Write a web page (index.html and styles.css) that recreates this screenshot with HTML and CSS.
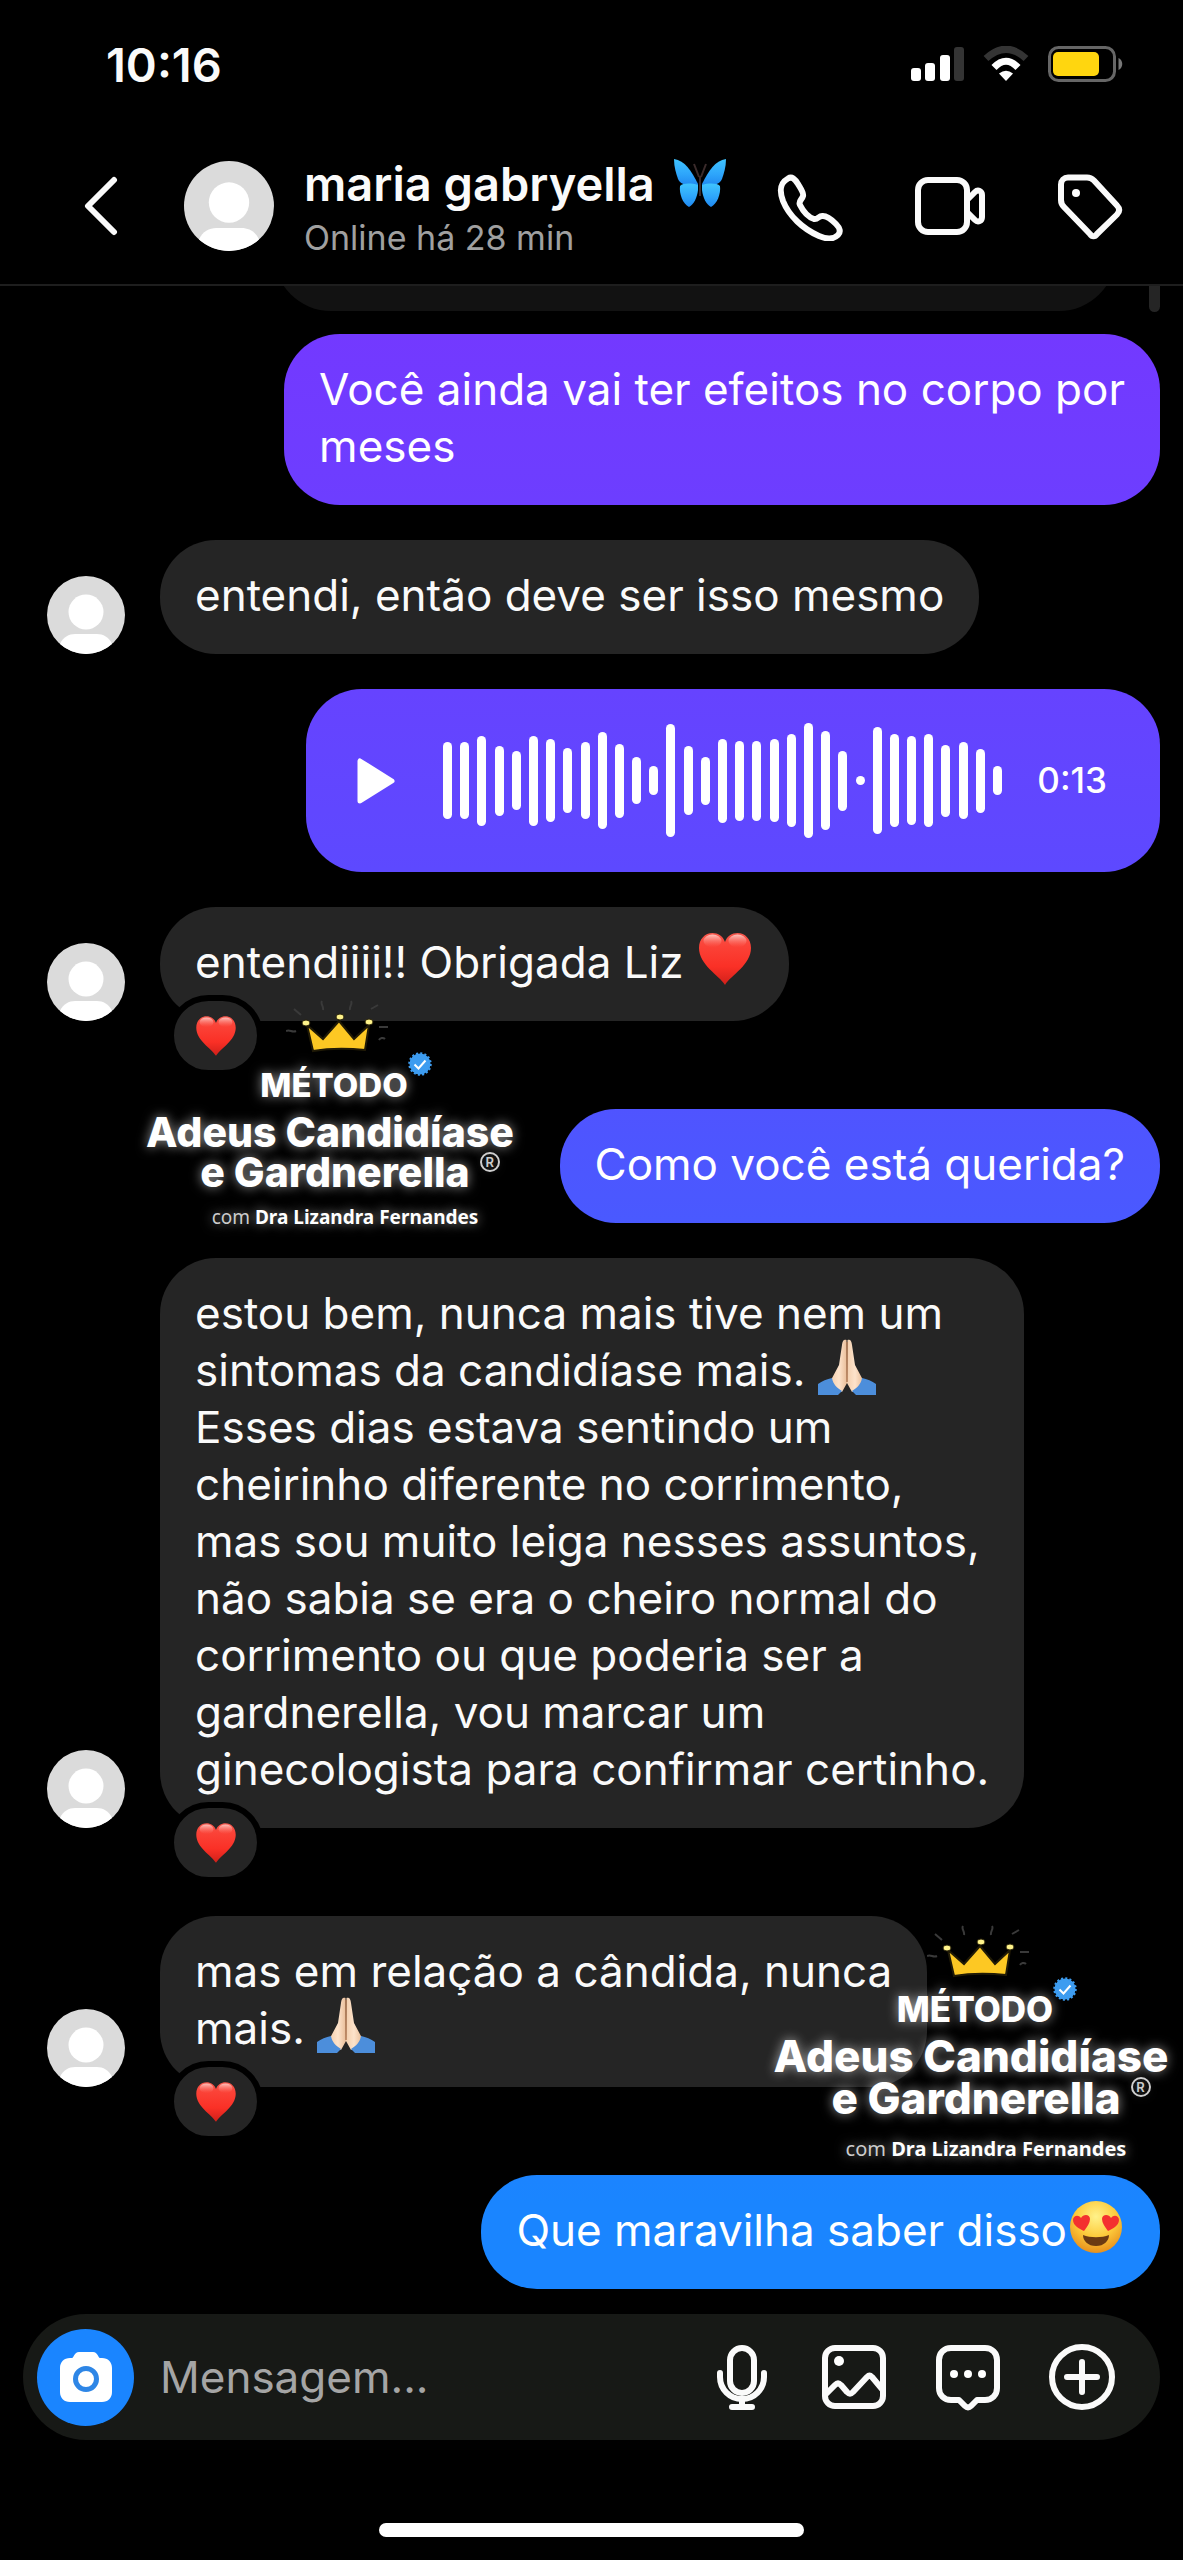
FILE: index.html
```html
<!DOCTYPE html>
<html lang="pt-BR">
	<head>
		<meta charset="utf-8">
		<title>maria gabryella</title>
		<meta name="viewport" content="width=device-width, initial-scale=1.0">
		<link rel="stylesheet" href="styles.css">
	</head>
	<body>
		<svg class="sprite" aria-hidden="true">
			<defs>
				<linearGradient id="heart-fill" x1="0" y1="0" x2="0" y2="1">
					<stop offset="0" stop-color="#f5574c"/>
					<stop offset=".25" stop-color="#fb4237"/>
					<stop offset=".65" stop-color="#fa3026"/>
					<stop offset="1" stop-color="#d0201a"/>
				</linearGradient>
				<linearGradient id="shine-fill" x1="0" y1="0" x2="0" y2="1">
					<stop offset="0" stop-color="#ffd0cb" stop-opacity=".9"/>
					<stop offset="1" stop-color="#ff6a5e" stop-opacity="0"/>
				</linearGradient>
				<linearGradient id="wing-fill" x1="0" y1="0" x2="0" y2="1">
					<stop offset="0" stop-color="#3fc4ff"/>
					<stop offset=".55" stop-color="#2ea6fb"/>
					<stop offset="1" stop-color="#1f88f0"/>
				</linearGradient>
				<radialGradient id="face-fill" cx=".5" cy=".3" r=".7">
					<stop offset="0" stop-color="#fff28a"/>
					<stop offset=".55" stop-color="#fdcb3c"/>
					<stop offset="1" stop-color="#e8901c"/>
				</radialGradient>
				<linearGradient id="skin-fill" x1="0" y1="0" x2="1" y2="0">
					<stop offset="0" stop-color="#f3cfae"/>
					<stop offset=".5" stop-color="#fde3cb"/>
					<stop offset="1" stop-color="#e9bd98"/>
				</linearGradient>
			</defs>
			<symbol id="avatar" viewBox="0 0 78 78">
				<circle cx="39" cy="39" r="39" fill="#dbdbdb"/>
				<circle cx="39" cy="36" r="17.500" fill="#fff"/>
				<path d="M13 68c3-7 9-10 15-10h22c6 0 12 3 15 10a39 39 0 0 1-52 0z" fill="#fff"/>
			</symbol>
			<symbol id="heart" viewBox="0 0 58 58">
				<path d="M29 55C23 45 3 35 3 18 3 9 9 3 16.500 3 22 3 27 6 29 12 31 6 36 3 41.500 3 49 3 55 9 55 18 55 35 35 45 29 55z" fill="url(#heart-fill)"/>
				<ellipse cx="16.500" cy="11" rx="9" ry="6.500" fill="url(#shine-fill)"/>
				<ellipse cx="41.500" cy="11" rx="9" ry="6.500" fill="url(#shine-fill)"/>
			</symbol>
			<symbol id="hands" viewBox="0 0 58 58">
				<path d="M28.500 2c-3-1-4 1-4.500 5l-3 20-8 15c2 7 6 10 11 12l5-9z" fill="url(#skin-fill)"/>
				<path d="M29.500 2c3-1 4 1 4.500 5l3 20 8 15c-2 7-6 10-11 12l-5-9z" fill="url(#skin-fill)"/>
				<path d="M0 46c4-3 9-5 14-6 1 6 5 10 10 13l-4 4H0z" fill="#4c8edb"/>
				<path d="M58 46c-4-3-9-5-14-6-1 6-5 10-10 13l4 4h20z" fill="#4c8edb"/>
				<path d="M29 4v40" stroke="#b07a54" stroke-width="1.500"/>
			</symbol>
			<symbol id="crown" viewBox="0 0 104 54">
				<path d="M8 10l7 6M36 2c-2 3 2 5 1 9M65 2c2 3-2 5-1 9M92 6l-7 4M0 32c4-2 6 2 10 0M93 28h9M93 41c1-2 4-3 6-1" fill="none" stroke="#3a3a3a" stroke-width="2"/>
				<path d="M21 26l16 14L53 22l15 18 15-14-4 25c-18-2-35-2-52 1z" fill="#fdc823" stroke="#201a06" stroke-width="2"/>
				<ellipse cx="20" cy="24" rx="4" ry="3" fill="#fff38b" stroke="#2b240a"/>
				<ellipse cx="54" cy="18" rx="4" ry="3" fill="#fff38b" stroke="#2b240a"/>
				<ellipse cx="83" cy="23" rx="4" ry="3" fill="#fff38b" stroke="#2b240a"/>
			</symbol>
			<symbol id="verified" viewBox="0 0 24 24">
				<circle cx="12" cy="12" r="10.500" fill="#3d9cf0" stroke="#3d9cf0" stroke-width="2.500" stroke-dasharray="2 2.120"/>
				<path d="M6.500 12.500l4 4 7-8" fill="none" stroke="#fff" stroke-width="2"/>
			</symbol>
		</svg>

		<header class="top">
			<div class="status">
				<time>10:16</time>
				<div class="status-icons">
					<svg width="53" height="36" viewBox="0 0 53 36">
						<g fill="#fff">
							<rect y="22" width="10" height="13" rx="3"/>
							<rect x="14" y="17" width="10" height="18" rx="3"/>
							<rect x="29" y="9" width="10" height="26" rx="3"/>
						</g>
						<rect x="43" y="1" width="10" height="34" rx="3" fill="#343434"/>
					</svg>
					<svg width="46" height="36" viewBox="0 0 46 36">
						<path d="M3 12.500Q23-6 43 12.500" fill="none" stroke="#343434" stroke-width="7"/>
						<path d="M11 21.500Q23 9 35 21.500" fill="none" stroke="#fff" stroke-width="7"/>
						<path d="M16 27.500Q23 22 30 27.500L23 35z" fill="#fff"/>
					</svg>
					<svg width="75" height="36" viewBox="0 0 75 36">
						<rect x="1.500" y="1.500" width="65" height="33" rx="9" fill="none" stroke="#666" stroke-width="3"/>
						<rect x="5" y="6" width="46" height="24" rx="5" fill="#ffd60f"/>
						<path d="M70.500 12c5 2 5 10 0 12z" fill="#777"/>
					</svg>
				</div>
			</div>
			<div class="contact">
				<button class="back" aria-label="Voltar">
					<svg width="34" height="60" viewBox="0 0 34 60"><path d="M30 4L4 30l26 26" class="line"/></svg>
				</button>
				<svg class="avatar-big" role="img" aria-label="Foto do perfil"><use href="#avatar"/></svg>
				<div class="who">
					<h1>maria gabryella
						<svg class="butterfly" viewBox="0 0 58 50" role="img" aria-label="borboleta">
							<path d="M27 26C20 12 14 3 3 1c0 8 2 14 4 20 1 3 4 5 8 6l12 1z" fill="url(#wing-fill)"/>
							<path d="M31 26C38 12 44 3 55 1c0 8-2 14-4 20-1 3-4 5-8 6l-12 1z" fill="url(#wing-fill)"/>
							<path d="M27 27c-7-2-15-2-18 1-1 8 3 18 9 21 5-3 8-9 9-17zM31 27c7-2 15-2 18 1 1 8-3 18-9 21-5-3-8-9-9-17z" fill="url(#wing-fill)"/>
							<path d="M29 18v20M28 19L23 6M30 19l5-13" stroke="#3b2b2b" stroke-width="2" fill="none"/>
						</svg>
					</h1>
					<p>Online há 28 min</p>
				</div>
				<nav class="actions">
					<button aria-label="Ligar">
						<svg width="70" height="70" viewBox="0 0 70 70"><path class="line" d="M13 7.500C17 5 20 8 23 13c3 5 6 9 5 12-1 4-5 5-3 9 3 6 8 12 14 14 4 1 5-4 9-3 4 0 9 4 13 8 4 4 5 8 2 11-5 5-12 4-19 1C28 58 14 45 8 30 4 19 5 12 13 7.500z"/></svg>
					</button>
					<button aria-label="Chamada de vídeo">
						<svg width="70" height="70" viewBox="0 0 70 70"><rect class="line" x="3" y="9" width="49" height="52" rx="10"/><path class="line" d="M53 28l7-7c3-3 7-1 7 3v22c0 4-4 6-7 3l-7-7"/></svg>
					</button>
					<button aria-label="Etiqueta">
						<svg width="70" height="70" viewBox="0 0 70 70"><path class="line" d="M13 6.500h19c3 0 5 1 7 3l23 25c3 3 3 6 0 9L42 63c-2 3-5 3-7 0L9 36c-2-2-3-4-3-7V13.500c0-4 3-7 7-7z"/><circle cx="21" cy="22" r="4" fill="#fff"/></svg>
					</button>
				</nav>
			</div>
		</header>

		<main class="chat">
			<div class="scrollbar"></div>
			<div class="faded"><div></div></div>
			<div class="msg out">
				<p class="bubble">Você ainda vai ter efeitos no corpo por<br>meses</p>
			</div>
			<div class="msg">
				<svg class="avatar"><use href="#avatar"/></svg>
				<p class="bubble">entendi, então deve ser isso mesmo</p>
			</div>
			<div class="msg out">
				<div class="bubble voice">
					<button aria-label="Reproduzir">
						<svg width="40" height="48" viewBox="0 0 40 48"><path d="M4 4v40l32-20z" fill="#fff" stroke="#fff" stroke-width="5" stroke-linejoin="round"/></svg>
					</button>
					<div class="wave">
						<i style="height:77px"></i><i style="height:77px"></i><i style="height:90px"></i><i style="height:70px"></i><i style="height:59px"></i><i style="height:90px"></i><i style="height:83px"></i><i style="height:65px"></i><i style="height:77px"></i><i style="height:97px"></i><i style="height:74px"></i>
						<i style="height:47px"></i><i style="height:29px"></i><i style="height:113px"></i><i style="height:69px"></i><i style="height:48px"></i><i style="height:84px"></i><i style="height:80px"></i><i style="height:80px"></i><i style="height:83px"></i><i style="height:93px"></i><i style="height:115px"></i>
						<i style="height:99px"></i><i style="height:60px"></i><i style="height:9px"></i><i style="height:107px"></i><i style="height:93px"></i><i style="height:89px"></i><i style="height:93px"></i><i style="height:72px"></i><i style="height:77px"></i><i style="height:64px"></i><i style="height:29px"></i>
					</div>
					<span>0:13</span>
				</div>
			</div>
			<div class="msg reacted">
				<svg class="avatar"><use href="#avatar"/></svg>
				<p class="bubble">entendiiii!! Obrigada Liz <svg class="emoji" role="img" aria-label="coração"><use href="#heart"/></svg></p>
				<span class="reaction"><svg role="img" aria-label="coração"><use href="#heart"/></svg></span>
				<div class="brand">
					<svg class="crown"><use href="#crown"/></svg>
					<div class="metodo">MÉTODO<svg class="verified"><use href="#verified"/></svg></div>
					<div class="title">Adeus Candidíase</div>
					<div class="title second">e Gardnerella<sup>R</sup></div>
					<div class="author">com <b>Dra Lizandra Fernandes</b></div>
				</div>
			</div>
			<div class="msg out">
				<p class="bubble">Como você está querida?</p>
			</div>
			<div class="msg reacted">
				<svg class="avatar"><use href="#avatar"/></svg>
				<p class="bubble">estou bem, nunca mais tive nem um<br>sintomas da candidíase mais. <svg class="emoji" role="img" aria-label="mãos juntas"><use href="#hands"/></svg><br>Esses dias estava sentindo um<br>cheirinho diferente no corrimento,<br>mas sou muito leiga nesses assuntos,<br>não sabia se era o cheiro normal do<br>corrimento ou que poderia ser a<br>gardnerella, vou marcar um<br>ginecologista para confirmar certinho.</p>
				<span class="reaction"><svg role="img" aria-label="coração"><use href="#heart"/></svg></span>
			</div>
			<div class="msg reacted">
				<svg class="avatar"><use href="#avatar"/></svg>
				<p class="bubble">mas em relação a cândida, nunca<br>mais. <svg class="emoji" role="img" aria-label="mãos juntas"><use href="#hands"/></svg></p>
				<span class="reaction"><svg role="img" aria-label="coração"><use href="#heart"/></svg></span>
				<div class="brand large">
					<svg class="crown"><use href="#crown"/></svg>
					<div class="metodo">MÉTODO<svg class="verified"><use href="#verified"/></svg></div>
					<div class="title">Adeus Candidíase</div>
					<div class="title second">e Gardnerella<sup>R</sup></div>
					<div class="author">com <b>Dra Lizandra Fernandes</b></div>
				</div>
			</div>
			<div class="msg out">
				<p class="bubble">Que maravilha saber disso<svg class="emoji" viewBox="0 0 58 58" role="img" aria-label="olhos de coração">
					<circle cx="29" cy="29" r="26" fill="url(#face-fill)"/>
					<path d="M16 37c7 3 19 3 26 0 0 6-5 11-13 11s-13-5-13-11z" fill="#6b3a12"/>
					<path d="M17 33c-4-2-11-5-11-11 0-4 5-6 8-2 2-4 9-4 9 1 0 4-3 8-6 12zM41 33c4-2 11-5 11-11 0-4-5-6-8-2-2-4-9-4-9 1 0 4 3 8 6 12z" fill="#f4302f"/>
				</svg></p>
			</div>
		</main>

		<form class="composer">
			<button type="button" class="camera" aria-label="Câmera">
				<svg width="54" height="52" viewBox="0 0 54 52"><path d="M11 7h2c2 0 2-6 7-6h14c5 0 5 6 7 6h2c6 0 10 4 10 10v24c0 6-4 10-10 10H11C5 51 1 47 1 41V17C1 11 5 7 11 7z" fill="#fff"/><circle cx="27" cy="28" r="10.500" fill="#fff" stroke="#2e86e6" stroke-width="5"/></svg>
			</button>
			<input type="text" placeholder="Mensagem..." aria-label="Mensagem">
			<button type="button" aria-label="Gravar áudio">
				<svg width="70" height="70" viewBox="0 0 70 70"><rect class="line" x="25" y="6" width="24" height="45" rx="12"/><path class="line" d="M15 31v4a22 22 0 0 0 44 0v-4M37 57v8M27 65h20"/></svg>
			</button>
			<button type="button" aria-label="Galeria">
				<svg width="70" height="70" viewBox="0 0 70 70"><rect class="line" x="6" y="6" width="58" height="58" rx="10"/><circle cx="20" cy="19" r="5" fill="#fff"/><path class="line" d="M7 52l9-9c2-2 4-2 6 0l6 7c2 2 4 2 6 0l14-15c2-2 3-2 5 0l10 12"/></svg>
			</button>
			<button type="button" aria-label="Figurinhas">
				<svg width="70" height="70" viewBox="0 0 70 70"><path class="line" d="M18 6h34c7 0 12 5 12 12v28c0 7-5 12-12 12h-8l-6 6c-2 2-4 2-6 0l-6-6h-8C11 58 6 53 6 46V18C6 11 11 6 18 6z"/><g fill="#fff"><circle cx="21" cy="32" r="4"/><circle cx="35" cy="32" r="4"/><circle cx="49" cy="32" r="4"/></g></svg>
			</button>
			<button type="button" aria-label="Mais">
				<svg width="70" height="70" viewBox="0 0 70 70"><circle class="line" cx="35" cy="35" r="30"/><path class="line" d="M35 20v30M20 35h30"/></svg>
			</button>
		</form>
		<div class="home-bar"></div>
	</body>
</html>
```

FILE: styles.css
```css
* {
	box-sizing: border-box;
}
body {
	margin: 0;
	min-height: 100vh;
	display: flex;
	flex-direction: column;
	background-color: #000;
	color: #fafafa;
	font: 44px/57px Inter, 'Liberation Sans', sans-serif;
}
svg {
	flex-shrink: 0;
}
h1, p {
	margin: 0;
}
button {
	display: flex;
	padding: 0;
	border: 0;
	background: none;
	color: inherit;
	font: inherit;
}
.sprite {
	position: absolute;
	width: 0;
	height: 0;
}
.line {
	fill: none;
	stroke: #fafafa;
	stroke-width: 6px;
	stroke-linecap: round;
	stroke-linejoin: round;
}

/* header */
.top {
	border-bottom: 2px solid #1e1e1e;
}
.status {
	display: flex;
	justify-content: space-between;
	align-items: center;
	height: 128px;
	padding: 0 60px 0 106px;
	font-size: 47px;
	font-weight: 600;
}
.status-icons {
	display: flex;
	gap: 19px;
}
.contact {
	display: flex;
	align-items: center;
	height: 156px;
	padding: 0 58px 0 84px;
}
.avatar-big {
	width: 90px;
	height: 90px;
	margin: 0 30px 0 66px;
}
.who {
	flex: 1;
	padding-top: 6px;
	white-space: nowrap;
}
.who h1 {
	font-size: 47px;
	line-height: 58px;
	font-weight: 600;
}
.who p {
	color: #a0a0a0;
	font-size: 34px;
	line-height: 50px;
}
.butterfly {
	width: 58px;
	height: 50px;
	margin-left: 4px;
	vertical-align: -7px;
}
.actions {
	display: flex;
	gap: 70px;
}

/* messages */
.chat {
	position: relative;
	flex: 1;
	display: flex;
	flex-direction: column;
	gap: 35px;
	padding: 0 23px;
}
.scrollbar {
	position: absolute;
	top: 0;
	right: 23px;
	width: 11px;
	height: 26px;
	border-radius: 0 0 6px 6px;
	background-color: #252525;
}
.faded {
	display: flex;
	align-items: flex-end;
	height: 25px;
	margin: 0 44px -12px 251px;
	overflow: hidden;
}
.faded div {
	flex: 1;
	height: 114px;
	border-radius: 57px;
	background-color: #121212;
}
.msg {
	position: relative;
	display: flex;
	align-items: flex-end;
	gap: 35px;
	padding-left: 24px;
}
.out {
	justify-content: flex-end;
}
.reacted {
	margin-bottom: 53px;
}
.avatar {
	width: 78px;
	height: 78px;
}
.bubble {
	padding: 27px 35px 30px;
	border-radius: 56px;
	background-color: #252525;
	white-space: nowrap;
}
/* one gradient runs behind every sent bubble */
.out .bubble {
	background: linear-gradient(#7339ff 13%, #6643ff 27%, #5d49ff 34%, #4d56ff 45%, #1a85ff 86%) fixed;
	color: #fff;
}
.emoji {
	width: 58px;
	height: 58px;
	margin-top: -20px;
	vertical-align: -10px;
}
.reaction {
	position: absolute;
	left: 145px;
	bottom: -55px;
	display: flex;
	align-items: center;
	justify-content: center;
	width: 95px;
	height: 81px;
	border: 6px solid #000;
	border-radius: 41px;
	background-color: #252525;
}
.reaction svg {
	width: 44px;
	height: 44px;
}
.voice {
	display: flex;
	align-items: center;
	width: 854px;
	height: 183px;
	padding: 0 53px 0 50px;
	font-size: 35px;
	font-weight: 500;
}
.wave {
	flex: 1;
	display: flex;
	align-items: center;
	justify-content: space-between;
	margin: 0 35px 0 47px;
}
.wave i {
	width: 9px;
	border-radius: 5px;
	background-color: #fff;
}

/* brand mark over the conversation */
.brand {
	position: absolute;
	left: 122px;
	top: 92px;
	width: 370px;
	display: flex;
	flex-direction: column;
	align-items: center;
	color: #fff;
	font-size: 41px;
	font-weight: 800;
	line-height: 40px;
	text-shadow: 0 0 12px rgba(255, 255, 255, .6);
	white-space: nowrap;
	z-index: 1;
}
.crown {
	width: 104px;
	height: 54px;
	margin-left: 16px;
}
.metodo {
	position: relative;
	margin: 12px 0 7px 8px;
	font-size: 33px;
}
.verified {
	position: absolute;
	right: -24px;
	top: -13px;
	width: 24px;
	height: 24px;
}
.second {
	display: flex;
	gap: 10px;
	margin-left: 40px;
}
.second sup {
	width: 20px;
	height: 20px;
	border: 2px solid #ccc;
	border-radius: 50%;
	color: #ccc;
	font-size: 13px;
	font-weight: 600;
	line-height: 16px;
	text-align: center;
}
.author {
	margin: 5px 0 0 30px;
	font: 400 19px/40px 'Noto Sans', sans-serif;
	color: #ccc;
}
.author b {
	color: #fff;
}
.large {
	left: 753px;
	top: 8px;
	width: 390px;
	font-size: 44px;
	line-height: 42px;
}
.large .metodo {
	font-size: 35px;
	line-height: 38px;
}
.large .author {
	margin-top: 10px;
	font-size: 20px;
}

/* composer */
.composer {
	display: flex;
	align-items: center;
	gap: 44px;
	height: 126px;
	margin: 0 23px;
	padding: 0 43px 0 14px;
	border-radius: 63px;
	background-color: #171916;
}
.composer button {
	flex-shrink: 0;
}
.composer .camera {
	align-items: center;
	justify-content: center;
	width: 97px;
	height: 97px;
	margin-right: -18px;
	border-radius: 50%;
	background-color: #1a85ff;
}
.composer input {
	flex: 1;
	min-width: 0;
	padding: 0;
	border: 0;
	outline: 0;
	background: none;
	color: #fafafa;
	font: inherit;
}
.composer input::placeholder {
	color: #a5a5a5;
	opacity: 1;
}
.home-bar {
	width: 36%;
	height: 14px;
	margin: 83px auto 23px;
	border-radius: 7px;
	background-color: #fff;
}
```
